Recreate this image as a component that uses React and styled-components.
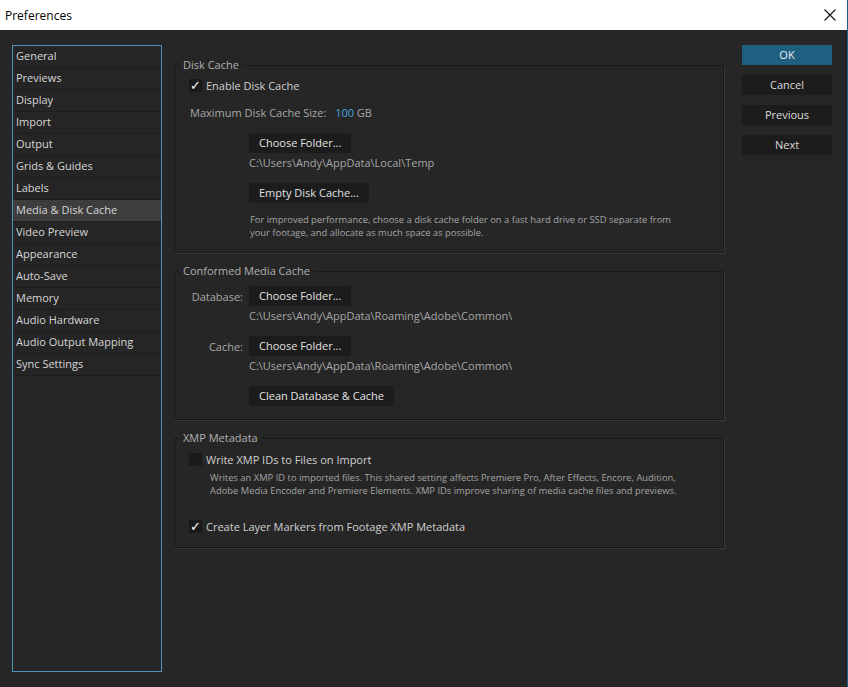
import React from "react";
import styled, { createGlobalStyle } from "styled-components";

const GlobalStyle = createGlobalStyle`
  html, body {
    margin: 0;
    padding: 0;
    background: #262626;
  }
  body {
    font-family: "Open Sans", "Noto Sans", sans-serif;
  }
`;

const menuItems = [
  "General",
  "Previews",
  "Display",
  "Import",
  "Output",
  "Grids & Guides",
  "Labels",
  "Media & Disk Cache",
  "Video Preview",
  "Appearance",
  "Auto-Save",
  "Memory",
  "Audio Hardware",
  "Audio Output Mapping",
  "Sync Settings",
];

const App = () => {
  return (
    <Window>
      <GlobalStyle />
      <TitleBar>
        <Title>Preferences</Title>
        <CloseButton>
          <svg width="12" height="12" viewBox="0 0 12 12">
            <path d="M0.5 0.5 L11.5 11.5 M11.5 0.5 L0.5 11.5" stroke="#111" strokeWidth="1.1" fill="none" />
          </svg>
        </CloseButton>
      </TitleBar>
      <Body>
        <Sidebar>
          {menuItems.map((item) => (
            <MenuItem key={item} $active={item === "Media & Disk Cache"}>
              {item}
            </MenuItem>
          ))}
        </Sidebar>

        <Main>
          <Group $pb={13}>
            <Legend>Disk Cache</Legend>
            <CheckRow $mt={-1}>
              <Check $checked>✓</Check>
              Enable Disk Cache
            </CheckRow>
            <Label $mt={12}>
              Maximum Disk Cache Size: <Value>100</Value> GB
            </Label>
            <Indent $mt={12}>
              <Button>Choose Folder...</Button>
            </Indent>
            <Path>C:\Users\Andy\AppData\Local\Temp</Path>
            <Indent $mt={13}>
              <Button>Empty Disk Cache...</Button>
            </Indent>
            <Note $mt={10} $ml={61}>
              For improved performance, choose a disk cache folder on a fast hard drive or SSD separate from
              <br />
              your footage, and allocate as much space as possible.
            </Note>
          </Group>

          <Group $pb={13} $pt={8}>
            <Legend>Conformed Media Cache</Legend>
            <FieldRow $mt={0}>
              <FieldLabel>Database:</FieldLabel>
              <Button>Choose Folder...</Button>
            </FieldRow>
            <Path>C:\Users\Andy\AppData\Roaming\Adobe\Common\</Path>
            <FieldRow $mt={13}>
              <FieldLabel>Cache:</FieldLabel>
              <Button>Choose Folder...</Button>
            </FieldRow>
            <Path>C:\Users\Andy\AppData\Roaming\Adobe\Common\</Path>
            <Indent $mt={13}>
              <Button>Clean Database &amp; Cache</Button>
            </Indent>
          </Group>

          <Group $pb={13} $pt={6}>
            <Legend>XMP Metadata</Legend>
            <CheckRow $mt={0}>
              <Check />
              Write XMP IDs to Files on Import
            </CheckRow>
            <Note $mt={4} $ml={21}>
              Writes an XMP ID to imported files. This shared setting affects Premiere Pro, After Effects, Encore, Audition,
              <br />
              Adobe Media Encoder and Premiere Elements. XMP IDs improve sharing of media cache files and previews.
            </Note>
            <CheckRow $mt={21}>
              <Check $checked>✓</Check>
              Create Layer Markers from Footage XMP Metadata
            </CheckRow>
          </Group>
        </Main>

        <Actions>
          <ActionButton $primary>OK</ActionButton>
          <ActionButton>Cancel</ActionButton>
          <ActionButton>Previous</ActionButton>
          <ActionButton>Next</ActionButton>
        </Actions>
      </Body>
    </Window>
  );
};

const Window = styled.div`
  width: 848px;
  height: 687px;
  background: #262626;
  border-right: 1px solid #1f5f86;
  box-sizing: border-box;
  overflow: hidden;
`;

const TitleBar = styled.div`
  height: 30px;
  background: #ffffff;
  display: flex;
  align-items: center;
  justify-content: space-between;
  padding: 0 10px 0 5px;
`;

const Title = styled.div`
  font-family: "Open Sans", sans-serif;
  font-size: 12px;
  color: #000;
`;

const CloseButton = styled.div`
  width: 14px;
  height: 14px;
  display: flex;
  align-items: center;
  justify-content: center;
`;

const Body = styled.div`
  display: flex;
  align-items: flex-start;
  padding: 15px 0 0 12px;
`;

const Sidebar = styled.div`
  flex: 0 0 150px;
  height: 627px;
  border: 1px solid #4f93b8;
  box-sizing: border-box;
  background: #252525;
`;

const MenuItem = styled.div`
  height: 22px;
  line-height: 20px;
  box-sizing: border-box;
  padding-left: 3px;
  font-size: 11px;
  color: #d6d6d6;
  border-bottom: 1px solid #1d1d1d;
  background: ${(p) => (p.$active ? "#3d3d3d" : "transparent")};
  white-space: nowrap;
`;

const Main = styled.div`
  flex: 0 0 550px;
  margin-left: 12px;
  padding-top: 13px;
  display: flex;
  flex-direction: column;
  gap: 11px;
`;

const Group = styled.fieldset`
  margin: 0;
  min-width: 0;
  padding: ${(p) => p.$pt ?? 6}px 14px ${(p) => p.$pb}px 14px;
  border: 1px solid #1a1a1a;
  box-shadow: 1px 1px 0 #383838;
  display: flex;
  flex-direction: column;
  align-items: flex-start;
`;

const Legend = styled.legend`
  margin-left: -10px;
  padding: 0 4px;
  font-size: 11px;
  line-height: 14px;
  color: #b0b0b0;
`;

const CheckRow = styled.div`
  display: flex;
  align-items: center;
  gap: 4px;
  height: 16px;
  margin-top: ${(p) => p.$mt}px;
  font-size: 11px;
  color: #d0d0d0;
`;

const Check = styled.span`
  width: 13px;
  height: 13px;
  background: #1a1a1a;
  color: #ffffff;
  font-family: "DejaVu Sans", sans-serif;
  font-size: 13px;
  font-weight: bold;
  line-height: 13px;
  text-align: center;
`;

const Label = styled.div`
  margin-top: ${(p) => p.$mt}px;
  padding-left: 1px;
  height: 16px;
  line-height: 16px;
  font-size: 11px;
  color: #a8a8a8;
  white-space: pre;
`;

const Value = styled.span`
  color: #4aa3df;
  margin-left: 6px;
`;

const Indent = styled.div`
  margin-top: ${(p) => p.$mt}px;
  margin-left: 60px;
`;

const Button = styled.div`
  height: 20px;
  line-height: 20px;
  padding: 0 10px;
  background: #1c1c1c;
  color: #e2e2e2;
  font-size: 11px;
  white-space: nowrap;
`;

const Path = styled.div`
  margin-top: 3px;
  margin-left: 60px;
  height: 14px;
  line-height: 14px;
  font-size: 11px;
  color: #a6a6a6;
  white-space: nowrap;
`;

const Note = styled.div`
  margin-top: ${(p) => p.$mt}px;
  margin-left: ${(p) => p.$ml}px;
  font-size: 9.4px;
  line-height: 13px;
  color: #a4a4a4;
  white-space: nowrap;
`;

const FieldRow = styled.div`
  display: flex;
  align-items: center;
  gap: 6px;
  margin-top: ${(p) => p.$mt}px;
`;

const FieldLabel = styled.div`
  width: 54px;
  text-align: right;
  font-size: 11px;
  color: #a8a8a8;
  white-space: nowrap;
`;

const Actions = styled.div`
  flex: 0 0 90px;
  margin-left: 18px;
  display: flex;
  flex-direction: column;
  gap: 10px;
`;

const ActionButton = styled.div`
  height: 20px;
  line-height: 20px;
  text-align: center;
  font-size: 11px;
  background: ${(p) => (p.$primary ? "#1f5f80" : "#1c1c1c")};
  color: ${(p) => (p.$primary ? "#e8eef2" : "#dcdcdc")};
`;

export default App;
